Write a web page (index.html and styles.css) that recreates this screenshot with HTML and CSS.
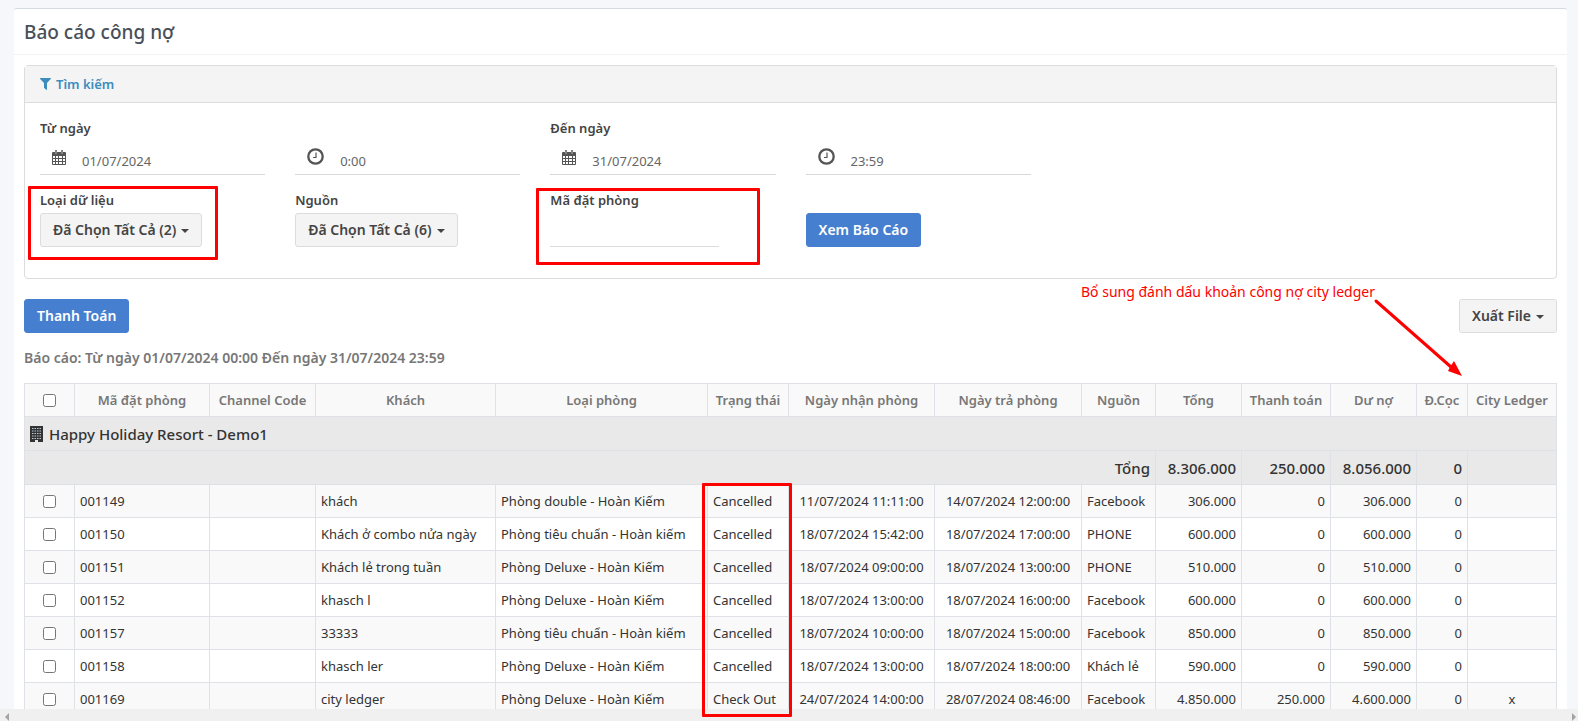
FILE: index.html
```html
<!DOCTYPE html>
<html lang="vi">
<head>
<meta charset="utf-8">
<title>Báo cáo công nợ</title>
<link rel="stylesheet" href="styles.css">
</head>
<body>
<svg class="sprite" aria-hidden="true">
  <symbol id="calendar" viewBox="0 0 14 15">
    <path fill="currentColor" fill-rule="evenodd" d="M1 2h2V1a1 1 0 0 1 2 0v1h4V1a1 1 0 0 1 2 0v1h2a1 1 0 0 1 1 1v11a1 1 0 0 1-1 1H1a1 1 0 0 1-1-1V3a1 1 0 0 1 1-1zM1 6v2h2V6zm3 0v2h2V6zm3 0v2h3V6zm4 0v2h2V6zM1 9v2h2V9zm3 0v2h2V9zm3 0v2h3V9zm4 0v2h2V9zM1 12v2h2v-2zm3 0v2h2v-2zm3 0v2h3v-2zm4 0v2h2v-2z"/>
    <path stroke="#fff" stroke-width=".6" d="M4 1v3M10 1v3"/>
  </symbol>
  <symbol id="clock" viewBox="0 0 17 17">
    <circle cx="8.500" cy="8.500" r="7.200" fill="none" stroke="currentColor" stroke-width="2.300"/>
    <path d="M9 4.500v5H6" fill="none" stroke="currentColor" stroke-width="1.200"/>
  </symbol>
</svg>
<div class="app">
  <main class="page">
    <section class="card">
      <h1 class="title">Báo cáo công nợ</h1>
      <div class="content">
        <form class="panel">
          <h2 class="panel-head">
            <a href="#filters"><svg class="funnel" viewBox="0 0 11 12"><path fill="currentColor" d="M0 .5Q0 0 .5 0h10q.8.1.4.8L7 5v6.500q-.2.700-.800.300L4 9.700V5L.1.900Q0 .7 0 .5z"/></svg>Tìm kiếm</a>
          </h2>
          <div class="filters" id="filters">
            <div class="field">
              <label for="from">Từ ngày</label>
              <div class="line"><svg class="cal"><use href="#calendar"/></svg><input id="from" type="text" value="01/07/2024"></div>
            </div>
            <div class="field bottom">
              <div class="line"><svg class="clock"><use href="#clock"/></svg><input aria-label="Từ giờ" type="text" value="0:00"></div>
            </div>
            <div class="field">
              <label for="to">Đến ngày</label>
              <div class="line"><svg class="cal"><use href="#calendar"/></svg><input id="to" type="text" value="31/07/2024"></div>
            </div>
            <div class="field bottom">
              <div class="line"><svg class="clock"><use href="#clock"/></svg><input aria-label="Đến giờ" type="text" value="23:59"></div>
            </div>
            <div class="field first">
              <label for="kind">Loại dữ liệu</label>
              <button id="kind" class="btn" type="button">Đã Chọn Tất Cả (2)<span class="caret"></span></button>
            </div>
            <div class="field">
              <label for="source">Nguồn</label>
              <button id="source" class="btn" type="button">Đã Chọn Tất Cả (6)<span class="caret"></span></button>
            </div>
            <div class="field">
              <label for="code">Mã đặt phòng</label>
              <input id="code" class="code" type="text">
            </div>
            <div class="field bottom">
              <button class="btn primary" type="button">Xem Báo Cáo</button>
            </div>
          </div>
        </form>
        <div class="toolbar">
          <button class="btn primary" type="button">Thanh Toán</button>
          <button class="btn" type="button">Xuất File<span class="caret"></span></button>
        </div>
        <p class="summary">Báo cáo: Từ ngày 01/07/2024 00:00 Đến ngày 31/07/2024 23:59</p>
        <table class="report">
          <colgroup>
            <col class="w-check"><col class="w-code"><col class="w-channel"><col class="w-guest"><col class="w-room"><col class="w-status"><col class="w-in"><col class="w-out"><col class="w-source"><col class="w-sum"><col class="w-wide"><col class="w-sum"><col class="w-deposit"><col class="w-wide">
          </colgroup>
          <thead>
            <tr><th><input type="checkbox" aria-label="Chọn tất cả"></th><th>Mã đặt phòng</th><th>Channel Code</th><th>Khách</th><th>Loại phòng</th><th>Trạng thái</th><th>Ngày nhận phòng</th><th>Ngày trả phòng</th><th>Nguồn</th><th>Tổng</th><th>Thanh toán</th><th>Dư nợ</th><th>Đ.Cọc</th><th>City Ledger</th></tr>
          </thead>
          <tbody class="group">
            <tr><td colspan="14"><svg class="building" viewBox="0 0 13 16"><path fill="#333" d="M0 0h13v16H8v-2H5v2H0z"/><path stroke="#b9cbd8" stroke-dasharray="1.500 1" d="M2 2.500h9.500M2 5h9.500M2 7.500h9.500M2 10h9.500M2 12.500h9.500"/></svg>Happy Holiday Resort - Demo1</td></tr>
            <tr><td colspan="9" class="num">Tổng</td><td class="num">8.306.000</td><td class="num">250.000</td><td class="num">8.056.000</td><td class="num">0</td><td></td></tr>
          </tbody>
          <tbody class="rows">
            <tr><td class="mid"><input type="checkbox" aria-label="001149"></td><td>001149</td><td></td><td>khách</td><td>Phòng double - Hoàn Kiếm</td><td>Cancelled</td><td class="mid">11/07/2024 11:11:00</td><td class="mid">14/07/2024 12:00:00</td><td>Facebook</td><td class="num">306.000</td><td class="num">0</td><td class="num">306.000</td><td class="num">0</td><td></td></tr>
            <tr><td class="mid"><input type="checkbox" aria-label="001150"></td><td>001150</td><td></td><td>Khách ở combo nửa ngày</td><td>Phòng tiêu chuẩn - Hoàn kiếm</td><td>Cancelled</td><td class="mid">18/07/2024 15:42:00</td><td class="mid">18/07/2024 17:00:00</td><td>PHONE</td><td class="num">600.000</td><td class="num">0</td><td class="num">600.000</td><td class="num">0</td><td></td></tr>
            <tr><td class="mid"><input type="checkbox" aria-label="001151"></td><td>001151</td><td></td><td>Khách lẻ trong tuần</td><td>Phòng Deluxe - Hoàn Kiếm</td><td>Cancelled</td><td class="mid">18/07/2024 09:00:00</td><td class="mid">18/07/2024 13:00:00</td><td>PHONE</td><td class="num">510.000</td><td class="num">0</td><td class="num">510.000</td><td class="num">0</td><td></td></tr>
            <tr><td class="mid"><input type="checkbox" aria-label="001152"></td><td>001152</td><td></td><td>khasch l</td><td>Phòng Deluxe - Hoàn Kiếm</td><td>Cancelled</td><td class="mid">18/07/2024 13:00:00</td><td class="mid">18/07/2024 16:00:00</td><td>Facebook</td><td class="num">600.000</td><td class="num">0</td><td class="num">600.000</td><td class="num">0</td><td></td></tr>
            <tr><td class="mid"><input type="checkbox" aria-label="001157"></td><td>001157</td><td></td><td>33333</td><td>Phòng tiêu chuẩn - Hoàn kiếm</td><td>Cancelled</td><td class="mid">18/07/2024 10:00:00</td><td class="mid">18/07/2024 15:00:00</td><td>Facebook</td><td class="num">850.000</td><td class="num">0</td><td class="num">850.000</td><td class="num">0</td><td></td></tr>
            <tr><td class="mid"><input type="checkbox" aria-label="001158"></td><td>001158</td><td></td><td>khasch ler</td><td>Phòng Deluxe - Hoàn Kiếm</td><td>Cancelled</td><td class="mid">18/07/2024 13:00:00</td><td class="mid">18/07/2024 18:00:00</td><td>Khách lẻ</td><td class="num">590.000</td><td class="num">0</td><td class="num">590.000</td><td class="num">0</td><td></td></tr>
            <tr><td class="mid"><input type="checkbox" aria-label="001169"></td><td>001169</td><td></td><td>city ledger</td><td>Phòng Deluxe - Hoàn Kiếm</td><td>Check Out</td><td class="mid">24/07/2024 14:00:00</td><td class="mid">28/07/2024 08:46:00</td><td>Facebook</td><td class="num">4.850.000</td><td class="num">250.000</td><td class="num">4.600.000</td><td class="num">0</td><td class="mid">x</td></tr>
          </tbody>
        </table>
      </div>
    </section>
  </main>
  <div class="scroll"><span class="left"></span><span class="right"></span></div>
  <div class="mark mark-kind"></div>
  <div class="mark mark-code"></div>
  <div class="mark mark-status"></div>
  <p class="note">Bổ sung đánh dấu khoản công nợ city ledger</p>
  <svg class="arrow" viewBox="0 0 90 80"><path d="M3 3 78 69" stroke="#f00" stroke-width="3" stroke-linecap="round"/><path fill="#f00" d="M89 78 75 73l2-4 4-6z"/></svg>
</div>
</body>
</html>
```
FILE: styles.css
```css
* { box-sizing: border-box; }

body {
  margin: 0;
  background: #f5f7fb;
  color: #333;
  font: 13px/20px "Noto Sans", "Open Sans", sans-serif;
}

h1, h2, p { margin: 0; }
input, button { font: inherit; color: inherit; }
.sprite { position: absolute; width: 0; height: 0; }

.app {
  position: relative;
  display: flex;
  flex-direction: column;
  height: 100vh;
  overflow: hidden;
}
.page { flex: 1; min-height: 0; overflow: hidden; padding: 8px 11px 0 14px; }
.card { background: #fff; border-top: 1px solid #d5d9e4; border-radius: 3px; }
.title {
  padding: 13px 10px 11px;
  border-bottom: 1px solid #f2f2f2;
  color: #495057;
  font-size: 19px;
  line-height: 21px;
  font-weight: 500;
}
.content { padding: 10px; }

.panel { border: 1px solid #dcdcdc; border-radius: 4px; }
.panel-head {
  padding: 8px 15px;
  background: #f4f4f4;
  border-bottom: 1px solid #dcdcdc;
  font-size: 13px;
  line-height: 20px;
  font-weight: 600;
}
.panel-head a { color: #3c8dbc; text-decoration: none; }
.funnel { width: 11px; height: 12px; margin-right: 5px; vertical-align: -1px; }

.filters {
  display: grid;
  grid-template-columns: repeat(6, minmax(0, 1fr));
  row-gap: 15px;
  padding: 15px 0 31px;
}
.field { display: flex; flex-direction: column; align-items: flex-start; padding: 0 15px; }
.field.first { grid-column: 1; }
.bottom { justify-content: flex-end; }
.field label { height: 22px; color: #444; font-weight: 600; }
.field .btn, .code { margin-top: 1px; }
.line {
  display: flex;
  align-items: center;
  width: 100%;
  height: 35px;
  border-bottom: 1px solid #d9d9d9;
}
.line input {
  flex: 1;
  min-width: 0;
  padding: 7px 0 0;
  border: 0;
  background: none;
  color: #666;
}
.cal { width: 14px; height: 15px; margin: 0 16px 0 12px; color: #555; }
.clock { width: 17px; height: 17px; margin: 0 16px 2px 12px; color: #555; }
.code { width: 75%; height: 34px; border: 0; border-bottom: 1px solid #dcdcdc; background: none; }

.btn {
  height: 34px;
  padding: 0 12px;
  border: 1px solid #dcdcdc;
  border-radius: 3px;
  background: #f4f4f4;
  color: #444;
  font-size: 14px;
  font-weight: 600;
}
.primary { background: #467fcf; border-color: #467fcf; color: #fff; }
.caret {
  display: inline-block;
  margin-left: 5px;
  border: 4px solid transparent;
  border-top-color: #444;
  border-bottom: 0;
  vertical-align: 2px;
}

.toolbar { display: flex; justify-content: space-between; margin-top: 20px; }
.summary { margin: 15px 0; color: #777; font-size: 14px; font-weight: 600; }

.report { width: 100%; border-collapse: collapse; table-layout: fixed; }
.report th, .report td { height: 33px; padding: 0 5px; border: 1px solid #dee2e6; white-space: nowrap; }
.report th { background: #f9f9f9; color: #777; font-weight: 600; }
.report td { text-align: left; }
.report td.num { text-align: right; }
.report td.mid { text-align: center; }
.report input { display: block; width: 13px; height: 13px; margin: 0 auto; }
.rows tr:nth-child(odd) { background: #f9f9f9; }
.group td { height: 34px; background: #e9e9e9; font-size: 15px; font-weight: 500; }
.building { width: 13px; height: 16px; margin-right: 6px; vertical-align: -2px; }

.w-check { width: 50px; }
.w-code { width: 135px; }
.w-channel { width: 106px; }
.w-guest { width: 180px; }
.w-room { width: 212px; }
.w-status { width: 81px; }
.w-in { width: 146px; }
.w-out { width: 147px; }
.w-source { width: 74px; }
.w-sum { width: 86px; }
.w-wide { width: 89px; }
.w-deposit { width: 51px; }

.scroll {
  display: flex;
  flex: none;
  justify-content: space-between;
  align-items: center;
  height: 12px;
  padding: 4px 2px 0 5px;
  background: #f0f0f0;
}
.left, .right { border: 4px solid transparent; }
.left { border-left: 0; border-right-color: #a3a3a3; }
.right { border-right: 0; border-left-color: #a3a3a3; }

/* Review annotations drawn over the page */
.mark { position: absolute; border: 3px solid #f00; border-radius: 1px; }
.mark-kind { left: 28px; top: 186px; width: 190px; height: 74px; }
.mark-code { left: 536px; top: 188px; width: 224px; height: 77px; }
.mark-status { left: 702px; top: 483px; width: 90px; height: 234px; }
.note { position: absolute; left: 1081px; top: 282px; color: #f00; font-size: 14px; white-space: nowrap; }
.arrow { position: absolute; left: 1373px; top: 298px; width: 90px; height: 80px; }
```
